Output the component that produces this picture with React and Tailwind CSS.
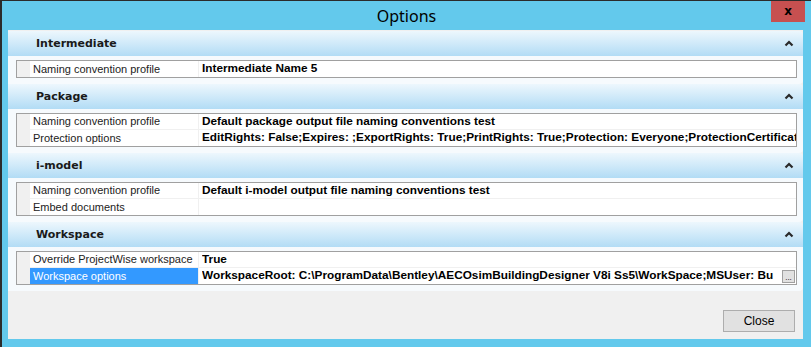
import React from "react";

const sections = [
  {
    title: "Intermediate",
    rows: [["Naming convention profile", "Intermediate Name 5"]],
  },
  {
    title: "Package",
    rows: [
      ["Naming convention profile", "Default package output file naming conventions test"],
      [
        "Protection options",
        "EditRights: False;Expires: ;ExportRights: True;PrintRights: True;Protection: Everyone;ProtectionCertificat",
      ],
    ],
  },
  {
    title: "i-model",
    rows: [
      ["Naming convention profile", "Default i-model output file naming conventions test"],
      ["Embed documents", ""],
    ],
  },
  {
    title: "Workspace",
    rows: [
      ["Override ProjectWise workspace", "True"],
      [
        "Workspace options",
        "WorkspaceRoot: C:\\ProgramData\\Bentley\\AECOsimBuildingDesigner V8i Ss5\\WorkSpace;MSUser: Bu",
        true,
      ],
    ],
  },
];

function Chevron() {
  return (
    <svg width="10" height="7" viewBox="0 0 10 7" className="block">
      <polyline points="1.5,5.5 5,2 8.5,5.5" fill="none" stroke="#2a2a2a" strokeWidth="2.2" />
    </svg>
  );
}

function Section({ title, rows }) {
  return (
    <div>
      <div className="h-[25px] flex items-center justify-between pl-[28px] pr-[9px] rounded-tr-[4px] bg-gradient-to-b from-[#edf7fd] to-[#b2dcf5]">
        <span className="font-['DejaVu_Sans',sans-serif] font-bold text-[11px] text-[#1a1a1a] leading-none">{title}</span>
        <Chevron />
      </div>
      <div className="bg-[#f6fafd] rounded-br-[4px] pt-[4px] pb-[6px] pl-[8px] pr-[6px]">
        <div className="border border-[#a0a0a0] bg-white">
          {rows.map(([label, value, selected], i) => (
            <div key={i} className={"flex h-[16px] " + (i < rows.length - 1 ? "border-b border-[#f0f0f0]" : "")}>
              <div className="w-[13px] shrink-0 bg-[#f0f0f0]" />
              <div
                className={
                  "w-[169px] shrink-0 pl-[3px] flex items-center border-r border-[#f0f0f0] text-[11px] whitespace-nowrap overflow-hidden font-['Liberation_Sans',sans-serif] " +
                  (selected ? "bg-[#3399ff] text-white" : "text-[#222]")
                }
              >
                {label}
              </div>
              <div className="flex-1 min-w-0 flex items-center pl-[3px] text-[11.8px] font-bold text-black whitespace-nowrap overflow-hidden font-['Liberation_Sans',sans-serif]">
                <span className="flex-1 min-w-0 overflow-hidden">{value}</span>
                {selected && (
                  <span className="w-[13px] h-[13px] shrink-0 mr-[1px] bg-[#e1e1e1] border border-[#a0a0a0] flex items-end justify-center text-[8px] font-normal leading-[9px] text-black">
                    ...
                  </span>
                )}
              </div>
            </div>
          ))}
        </div>
      </div>
    </div>
  );
}

export default function App() {
  return (
    <div className="w-[811px] h-[347px] bg-[#63c9ec] border-l-2 border-t border-[#2b2b2b] flex flex-col overflow-hidden">
      <div className="h-[29px] shrink-0 relative flex items-center justify-center">
        <span className="font-['Noto_Sans',sans-serif] text-[16px] text-black leading-none mt-[1px]">Options</span>
        <div className="absolute right-[6px] top-[-1px] w-[34px] h-[22px] bg-[#c75050] flex items-center justify-center">
          <span className="font-['DejaVu_Sans',sans-serif] font-bold text-[12px] text-black leading-none">x</span>
        </div>
      </div>
      <div className="ml-[6px] mr-[8px] h-[309px] shrink-0 bg-[#f0f0f0] flex flex-col pt-[1px]">
        {sections.map((s) => (
          <Section key={s.title} {...s} />
        ))}
        <div className="flex-1 flex items-end justify-end pr-[8px] pb-[7px]">
          <div className="w-[72px] h-[22px] bg-[#e1e1e1] border border-[#adadad] flex items-center justify-center font-['Liberation_Sans',sans-serif] text-[12px] text-black">
            Close
          </div>
        </div>
      </div>
    </div>
  );
}
